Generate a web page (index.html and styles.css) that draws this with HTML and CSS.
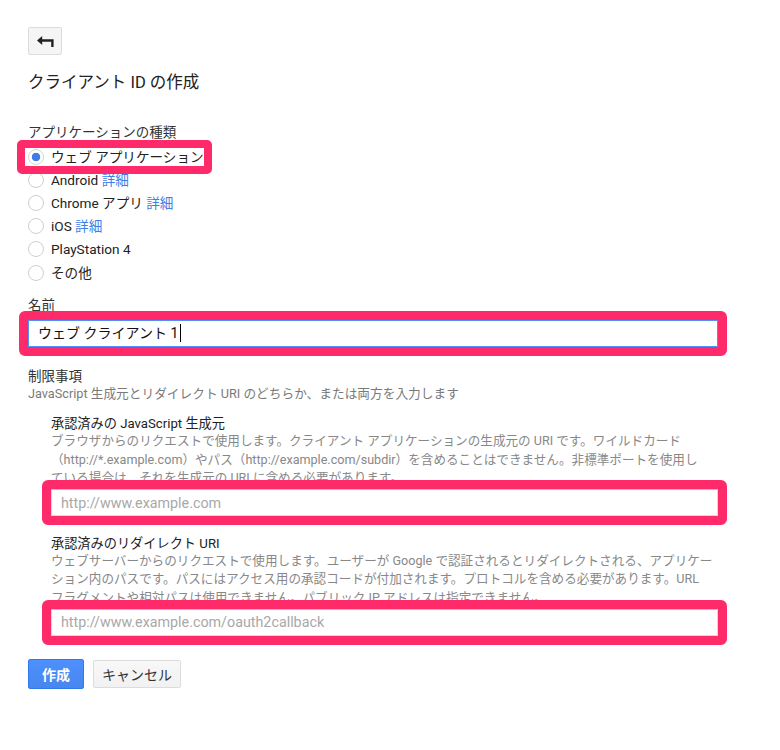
FILE: index.html
```html
<!DOCTYPE html>
<html lang="ja">
<head>
<meta charset="utf-8">
<title>クライアント ID の作成</title>
<link rel="stylesheet" href="styles.css">
</head>
<body>
<div class="page">
  <button class="back-btn" type="button" aria-label="戻る">
    <svg width="17" height="11" viewBox="0 0 17 11" aria-hidden="true">
      <path d="M0 4.5 L5.2 0 L5.2 9 Z" fill="#222"/>
      <path d="M4.5 3.3 H16.6 V11 H14.2 V5.7 H4.5 Z" fill="#222"/>
    </svg>
  </button>

  <h1 class="title">クライアント ID の作成</h1>

  <div class="label type-label">アプリケーションの種類</div>
  <div class="radio-list">
    <div class="radio-row"><span class="hl hl-row"><span class="radio checked"></span><span>ウェブ アプリケーション</span></span></div>
    <div class="radio-row"><span class="radio"></span><span>Android <a class="link">詳細</a></span></div>
    <div class="radio-row"><span class="radio"></span><span>Chrome アプリ <a class="link">詳細</a></span></div>
    <div class="radio-row"><span class="radio"></span><span>iOS <a class="link">詳細</a></span></div>
    <div class="radio-row"><span class="radio"></span><span>PlayStation 4</span></div>
    <div class="radio-row"><span class="radio"></span><span>その他</span></div>
  </div>

  <div class="label name-label">名前</div>
  <div class="hl hl-input name-box">
    <div class="text-input focused">ウェブ クライアント 1<span class="caret"></span></div>
  </div>

  <div class="label limit-label">制限事項</div>
  <div class="hint">JavaScript 生成元とリダイレクト URI のどちらか、または両方を入力します</div>

  <div class="sub first-sub">
    <div class="sub-title">承認済みの JavaScript 生成元</div>
    <p class="desc">ブラウザからのリクエストで使用します。クライアント アプリケーションの生成元の URI です。ワイルドカード<br>（http://*.example.com）やパス（http://example.com/subdir）を含めることはできません。非標準ポートを使用し<br>ている場合は、それを生成元の URI に含める必要があります。</p>
    <div class="hl hl-input sub-box">
      <input class="text-input" type="text" placeholder="http://www.example.com">
    </div>
  </div>

  <div class="sub second-sub">
    <div class="sub-title">承認済みのリダイレクト URI</div>
    <p class="desc">ウェブサーバーからのリクエストで使用します。ユーザーが Google で認証されるとリダイレクトされる、アプリケー<br>ション内のパスです。パスにはアクセス用の承認コードが付加されます。プロトコルを含める必要があります。URL<br>フラグメントや相対パスは使用できません。パブリック IP アドレスは指定できません。</p>
    <div class="hl hl-input sub-box">
      <input class="text-input" type="text" placeholder="http://www.example.com/oauth2callback">
    </div>
  </div>

  <div class="actions">
    <button class="btn btn-primary" type="button">作成</button>
    <button class="btn btn-cancel" type="button">キャンセル</button>
  </div>
</div>
</body>
</html>
```

FILE: styles.css
```css
* {
  box-sizing: border-box;
}

body {
  margin: 0;
  background: #fff;
  color: #222;
  font-family: Roboto, "Noto Sans CJK JP", sans-serif;
}

.page {
  width: 718px;
  padding: 27px 0 40px 28px;
}

.back-btn {
  display: flex;
  align-items: center;
  justify-content: center;
  width: 34px;
  height: 28px;
  padding: 0;
  border: 1px solid #dcdcdc;
  border-radius: 2px;
  background: #f5f5f5;
}

.title {
  margin: 18px 0 0;
  font-size: 16.5px;
  font-weight: normal;
  line-height: 20px;
  color: #222;
}

.label {
  font-size: 13.5px;
  line-height: 18px;
  color: #333;
}

.type-label {
  margin-top: 30px;
}

.radio-list {
  margin-top: 4px;
}

.radio-row {
  display: flex;
  align-items: center;
  height: 23.2px;
  font-size: 13.6px;
  color: #222;
}

.radio-row > span:last-child,
.hl-row > span:last-child {
  line-height: 18px;
}

.hl-row {
  display: inline-flex;
  align-items: center;
  height: 100%;
  background: #fff;
}

.radio {
  flex: none;
  width: 16px;
  height: 16px;
  margin-right: 7px;
  border: 1px solid #cfcfcf;
  border-radius: 50%;
  background: #fff;
}

.radio.checked {
  border-color: #d6d6d6;
  background: radial-gradient(circle, #3d7de9 0, #3d7de9 3.8px, #fff 4.6px);
}

.link {
  color: #3f7ee8;
  text-decoration: none;
}

.hl {
  position: relative;
}

.hl::after {
  content: "";
  position: absolute;
  inset: -9px;
  border: 9px solid #fe2a69;
  border-radius: 6px;
  pointer-events: none;
}

.hl-row::after {
  inset: -5.5px -8px -5.5px -11px;
  border-width: 8px;
  border-radius: 5px;
}

.name-label {
  margin-top: 12px;
}

.name-box {
  margin-top: 6px;
}

.text-input {
  display: block;
  width: 100%;
  height: 27px;
  margin: 0;
  padding: 0 9px;
  border: 1px solid #d9d9d9;
  border-top-color: #c0c0c0;
  border-radius: 0;
  background: #fff;
  font-family: Roboto, "Noto Sans CJK JP", sans-serif;
  font-size: 14.3px;
  line-height: 25px;
  color: #222;
  outline: none;
}

.text-input::placeholder {
  color: #a8a8a8;
}

.text-input.focused {
  border-color: #4d90fe;
  font-size: 14px;
  color: #111;
}

.caret {
  display: inline-block;
  width: 1px;
  height: 18px;
  margin-left: 2px;
  background: #000;
  vertical-align: -4px;
}

.limit-label {
  margin-top: 20px;
}

.hint {
  font-size: 12.7px;
  line-height: 18px;
  color: #7a7a7a;
}

.sub {
  padding-left: 23px;
}

.first-sub {
  margin-top: 12px;
}

.second-sub {
  margin-top: 18.5px;
}

.sub-title {
  font-size: 13.2px;
  line-height: 17px;
  color: #222;
}

.desc {
  margin: 0;
  font-size: 12.6px;
  line-height: 18.5px;
  color: #888;
  white-space: nowrap;
}

.sub-box {
  margin-top: 1.5px;
}

.actions {
  display: flex;
  align-items: center;
  gap: 9px;
  margin-top: 23px;
}

.btn {
  padding: 0;
  border-radius: 2px;
  font-family: Roboto, "Noto Sans CJK JP", sans-serif;
  font-size: 14px;
}

.btn-primary {
  width: 56px;
  height: 30px;
  border: 1px solid #3079ed;
  background: linear-gradient(#4d90fe, #4787ed);
  color: #fff;
  font-weight: bold;
}

.btn-cancel {
  width: 88px;
  height: 28px;
  border: 1px solid #dcdcdc;
  background: linear-gradient(#f8f8f8, #f1f1f1);
  color: #333;
}
```
